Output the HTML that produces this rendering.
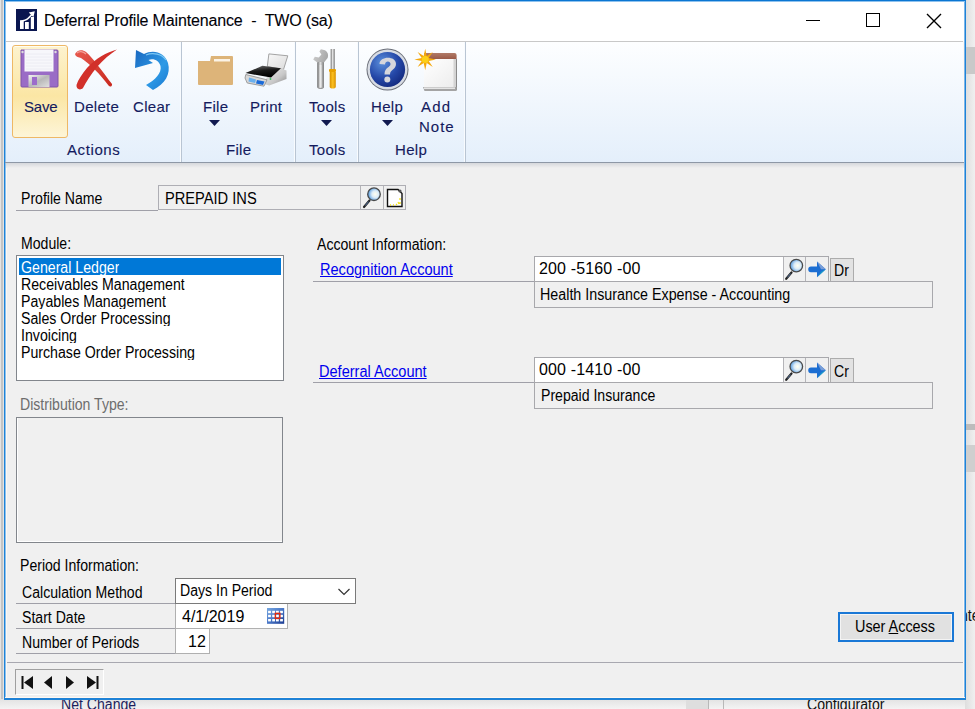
<!DOCTYPE html>
<html><head><meta charset="utf-8">
<style>
*{margin:0;padding:0;box-sizing:border-box}
html,body{width:975px;height:709px;overflow:hidden;background:#f3f3f3;font-family:"Liberation Sans",sans-serif;position:relative}
div,span,svg{position:absolute}
.rt{font-size:15px;color:#141b5e;white-space:nowrap;line-height:18px;letter-spacing:0.3px;-webkit-text-stroke:0.12px #141b5e}
.ft{font-size:16px;color:#000;white-space:nowrap;letter-spacing:0;line-height:18px;transform:scaleX(0.88);transform-origin:0 0}
.ul{height:1px;background:#a0a0a8}
.box{border:1px solid #a3a3a3}
</style></head><body>
<!-- background app -->
<div style="left:0;top:0;width:4px;height:709px;background:#e4e4e4"></div>
<div style="left:1px;top:0;width:2px;height:709px;background:#c4c4c4"></div>
<div style="left:0;top:699px;width:975px;height:10px;background:linear-gradient(#e2e2e2,#f4f4f4)"></div>
<div style="left:686px;top:699px;width:22px;height:10px;background:#dedede"></div>
<div style="left:708px;top:699px;width:1px;height:10px;background:#b8b8b8"></div>
<div style="left:723px;top:699px;width:1px;height:10px;background:#b8b8b8"></div>
<div class="ft" style="left:61px;top:696px;color:#1e1e5c">Net Change</div>
<div class="ft" style="left:807px;top:696px;color:#111">Configurator</div>
<div style="left:965px;top:0;width:10px;height:709px;background:linear-gradient(90deg,#dedede,#f0f0f0)"></div>
<div style="left:965px;top:47px;width:10px;height:27px;background:#c9c9c9"></div>
<div style="left:965px;top:424px;width:10px;height:6px;background:#bcbcbc"></div>
<div style="left:965px;top:445px;width:10px;height:27px;background:#cfcfcf"></div>
<div class="ft" style="left:960px;top:607px;color:#111">nte</div>

<!-- window frame -->
<div style="left:4px;top:0;width:962px;height:700px;border:1px solid #1f82d6;border-top-color:#0a76d2;border-bottom-width:2px;background:#f0f0f0"></div>
<div style="left:5px;top:1px;width:1px;height:697px;background:#8cc2ee"></div>
<div style="left:964px;top:1px;width:1px;height:697px;background:#7ab6ea"></div>
<div style="left:6px;top:1px;width:1px;height:696px;background:#fff8f2"></div>
<div style="left:963px;top:1px;width:1px;height:696px;background:#fff8f2"></div>
<div style="left:5px;top:697px;width:960px;height:1px;background:#fff8f2"></div>
<!-- title bar -->
<div style="left:6px;top:1px;width:958px;height:40px;background:#fff"></div>
<div style="left:5px;top:1px;width:960px;height:1px;background:#8ec2ee"></div>
<div style="left:6px;top:41px;width:957px;height:1px;background:#c8c8c8"></div>
<div class="rt" style="left:44px;top:12px;font-size:16px;color:#000;letter-spacing:-0.15px">Deferral Profile Maintenance&nbsp; -&nbsp; TWO (sa)</div>
<!-- ribbon -->
<div style="left:6px;top:42px;width:957px;height:120px;background:linear-gradient(#fdfeff,#e4effb)"></div>
<div style="left:5px;top:162px;width:959px;height:1px;background:#8e98a6"></div>
<div style="left:6px;top:163px;width:958px;height:5px;background:linear-gradient(#d6d8dc,#f0f0f0)"></div>

<!-- title icon -->
<svg style="left:16px;top:9px" width="21" height="22" viewBox="0 0 21 22">
<rect x="0" y="0" width="21" height="22" fill="#0a1650"/>
<rect x="4" y="12" width="3.7" height="8" fill="#fff"/>
<rect x="9" y="13" width="3.8" height="7" fill="#fff"/>
<rect x="14.8" y="8" width="3.2" height="12" fill="#fff"/>
<path d="M4 12.2 C7 11.8 10 11.5 12 9.5 L16 5.5" stroke="#fff" stroke-width="1.7" fill="none"/>
<path d="M18.8 2.2 L12.8 3.6 L17.4 8.2 Z" fill="#fff"/>
</svg>
<!-- window controls -->
<div style="left:806px;top:20px;width:14px;height:1.4px;background:#000"></div>
<div style="left:866px;top:13px;width:14px;height:14px;border:1.3px solid #000"></div>
<svg style="left:926px;top:13px" width="16" height="16" viewBox="0 0 16 16"><path d="M1 1 L15 15 M15 1 L1 15" stroke="#000" stroke-width="1.4"/></svg>

<!-- separators -->
<div style="left:180px;top:42px;width:1px;height:120px;background:#f8fbfe"></div>
<div style="left:181px;top:42px;width:1px;height:120px;background:#b9c5d3"></div>
<div style="left:294px;top:42px;width:1px;height:120px;background:#f8fbfe"></div>
<div style="left:295px;top:42px;width:1px;height:120px;background:#b9c5d3"></div>
<div style="left:357px;top:42px;width:1px;height:120px;background:#f8fbfe"></div>
<div style="left:358px;top:42px;width:1px;height:120px;background:#b9c5d3"></div>
<div style="left:464px;top:42px;width:1px;height:120px;background:#f8fbfe"></div>
<div style="left:465px;top:42px;width:1px;height:120px;background:#b9c5d3"></div>

<!-- save highlight -->
<div style="left:12px;top:45px;width:56px;height:93px;border:1px solid #eeb866;border-radius:3px;box-shadow:inset 0 1px 0 #fffdf0;background:linear-gradient(#fdf3cf,#fbe6a4 55%,#fdf5d8)"></div>
<!-- floppy -->
<svg style="left:20px;top:49px" width="39" height="39" viewBox="0 0 39 39">
<defs><linearGradient id="sh" x1="0" y1="0" x2="1" y2="1"><stop offset="0" stop-color="#f4f4f4"/><stop offset="0.5" stop-color="#b8b8b8"/><stop offset="1" stop-color="#e0e0e0"/></linearGradient></defs>
<path d="M1 1 H37 Q38 1 38 2 V37 Q38 38 37 38 H2 Q1 38 1 37 Z" fill="#9a6cc6" stroke="#7e54aa" stroke-width="1"/>
<rect x="4.5" y="0.5" width="29" height="22" fill="#f7f7fb"/>
<path d="M6 5 H32 M6 8 H32 M6 11 H32 M6 14 H32 M6 17 H32 M6 20 H32" stroke="#eaeaf2" stroke-width="0.8"/>
<rect x="8.5" y="26" width="21" height="12" fill="url(#sh)"/>
<rect x="12" y="28" width="5" height="8" fill="#9c6bcb"/>
<circle cx="2.5" cy="3" r="1.2" fill="#ddd"/><circle cx="35.5" cy="3" r="1.2" fill="#ddd"/>
</svg>
<!-- delete X -->
<svg style="left:75px;top:49px" width="43" height="42" viewBox="0 0 43 42">
<defs><linearGradient id="xg" x1="0" y1="0" x2="1" y2="1"><stop offset="0" stop-color="#e85a4e"/><stop offset="1" stop-color="#c8281e"/></linearGradient></defs>
<path d="M0 5 C2 1 7 0 11 3 C18 9 27 22 37 35 C37.5 37.5 35 38.5 33.5 36.5 C25 25 15 15 6 9 C4 8 1 8.5 0 5 Z" fill="url(#xg)"/>
<path d="M42 0.5 C32 3 20 10 12 19 C7 25 3 31 1.5 36 C1 40 5 42 8 39 C11 33 16 25 22 18 C28 11 35 5 42 0.5 Z" fill="#d2302a"/>
<path d="M2 4 C4 2 8 2 11 5" stroke="#f2a098" stroke-width="1.2" fill="none"/>
</svg>
<!-- clear undo -->
<svg style="left:133px;top:49px" width="38" height="42" viewBox="0 0 38 42">
<defs><linearGradient id="ug" x1="0" y1="0" x2="1" y2="1"><stop offset="0" stop-color="#1a68c0"/><stop offset="0.6" stop-color="#2e9ae6"/><stop offset="1" stop-color="#1a78d0"/></linearGradient></defs>
<path d="M3 1 L2 19 L20 14 L15.5 11 C21 9 26 12 27.5 17 C29 24 22 31 13 36 L20 41 C32 35 38 25 35 14 C32 4 21 0 11 5 Z" fill="url(#ug)"/>
<path d="M13 6 C20 3 29 5 33 11" stroke="#7cc8f4" stroke-width="1.2" fill="none"/>
</svg>
<!-- folder -->
<svg style="left:197px;top:55px" width="37" height="31" viewBox="0 0 37 31">
<path d="M1 6 H13 L14 1 H35 Q36 1 36 2 V29 Q36 30 35 30 H2 Q1 30 1 29 Z" fill="#ddb479"/>
<rect x="17" y="4" width="16" height="2.5" fill="#fbf3e6"/>
</svg>
<!-- printer -->
<svg style="left:240px;top:48px" width="52" height="44" viewBox="0 0 52 44">
<defs><linearGradient id="pg" x1="0" y1="0" x2="0.3" y2="1"><stop offset="0" stop-color="#777"/><stop offset="0.5" stop-color="#1a1a1a"/><stop offset="1" stop-color="#000"/></linearGradient>
<linearGradient id="pf" x1="0" y1="0" x2="1" y2="1"><stop offset="0" stop-color="#f0f0f0"/><stop offset="0.6" stop-color="#c8c8c8"/><stop offset="1" stop-color="#888"/></linearGradient>
<linearGradient id="pp" x1="0" y1="0" x2="1" y2="1"><stop offset="0" stop-color="#f8f8f8"/><stop offset="1" stop-color="#dcdcdc"/></linearGradient></defs>
<path d="M28.9 5.9 L47.8 7.8 L43.5 21.5 L27.3 18.5 Z" fill="url(#pp)" stroke="#9a9a9a" stroke-width="0.9"/>
<path d="M40 20 L46.5 22.4 L46.5 31 L29.2 37.6 L24 36 L27 29 Z" fill="url(#pf)"/>
<path d="M5.5 25 L22.4 17.8 L41 20.3 L31 29.6 Z" fill="url(#pg)"/>
<path d="M5.8 26.5 L27 31.8 L24 38.2 L7.2 35 L5 30 Z" fill="#d8d8d8" stroke="#8a8a8a" stroke-width="0.8"/>
<path d="M9 29.5 L16 31.5 L15 35 L8.5 33.5 Z" fill="#6ab0ee"/>
<path d="M17 32 L24.5 33.5 L23 37 L16 35.5 Z" fill="#1a6ad8"/>
<circle cx="30.5" cy="31" r="0.9" fill="#3cc060"/>
</svg>

<!-- tools -->
<svg style="left:312px;top:48px" width="26" height="42" viewBox="0 0 26 42">
<defs><linearGradient id="wg" x1="0" y1="0" x2="1" y2="0"><stop offset="0" stop-color="#6a6a6a"/><stop offset="0.45" stop-color="#e4e4e4"/><stop offset="1" stop-color="#7a7a7a"/></linearGradient>
<linearGradient id="wh" x1="0" y1="0" x2="1" y2="1"><stop offset="0" stop-color="#d0d0d0"/><stop offset="1" stop-color="#8a8a8a"/></linearGradient>
<linearGradient id="yh" x1="0" y1="0" x2="1" y2="0"><stop offset="0" stop-color="#d89000"/><stop offset="0.5" stop-color="#fcc020"/><stop offset="1" stop-color="#d89000"/></linearGradient></defs>
<path d="M8.9 1.2 L13 2.2 C15.8 3.8 16.8 7 15.6 10 L12 14.6 L11.8 39 Q11.8 41 8.6 41 Q5.4 41 5.4 39 L5.4 14.6 L1.2 11.6 L2.8 8.8 L6.8 9.4 L9.4 6.4 L7.4 3.4 Z" fill="url(#wh)"/>
<rect x="5.4" y="14" width="6.4" height="26" rx="1" fill="url(#wg)"/>
<rect x="7.6" y="17" width="2" height="22" fill="#f2f2f2" opacity="0.6"/>
<rect x="18.7" y="1" width="4.1" height="21" fill="url(#wg)"/>
<rect x="17" y="21" width="7" height="3" rx="1" fill="#e8a000"/>
<path d="M17.7 24 H23.8 V38.5 Q23.8 40.5 20.75 40.5 Q17.7 40.5 17.7 38.5 Z" fill="url(#yh)"/>
</svg>

<!-- help -->
<svg style="left:366px;top:48px" width="44" height="44" viewBox="0 0 44 44">
<defs><radialGradient id="hg" cx="0.35" cy="0.3" r="0.75"><stop offset="0" stop-color="#5b8fdc"/><stop offset="0.6" stop-color="#2548a8"/><stop offset="1" stop-color="#142a80"/></radialGradient></defs>
<circle cx="21.5" cy="21.5" r="21" fill="#6a6e78"/>
<circle cx="21.5" cy="21.5" r="20" fill="#d8dce4"/>
<circle cx="21.5" cy="21.5" r="17.6" fill="url(#hg)"/>
<path d="M13.5 16 C13.5 8 30 7.5 30 16 C30 21.5 24 21.5 24 26.5 L18.5 26.5 C18.5 19 24.5 19.5 24.5 16 C24.5 12.5 19 12.5 19 16.5 Z" fill="#d6d6dc"/>
<circle cx="21.3" cy="31.5" r="3" fill="#d6d6dc"/>
</svg>
<!-- add note -->
<svg style="left:413px;top:48px" width="46" height="46" viewBox="0 0 46 46">
<defs><linearGradient id="ng" x1="0" y1="0" x2="1" y2="1"><stop offset="0" stop-color="#fff"/><stop offset="1" stop-color="#ececec"/></linearGradient>
<linearGradient id="nb" x1="0" y1="0" x2="0" y2="1"><stop offset="0" stop-color="#b07a68"/><stop offset="1" stop-color="#9a5a48"/></linearGradient></defs>
<path d="M11 11 V5 H41.5 Q43.6 5 43.6 7 V11 Z" fill="url(#nb)"/>
<rect x="11" y="11" width="32.6" height="28" fill="url(#ng)"/>
<rect x="40.5" y="11" width="3.1" height="28" fill="#d4d4d4"/>
<rect x="43" y="11" width="1" height="31" fill="#8a8a8a"/>
<path d="M10 39 H43.6 V43 H11.5 Z" fill="#a4a4a4"/>
<path d="M11 39.5 H42 V40.8 H11 Z" fill="#f4f4f4"/>
<path d="M12.2 0.7 L10.7 8.0 L4.6 3.9 L8.7 10.0 L1.4 11.5 L8.7 13.0 L4.6 19.1 L10.7 15.0 L12.2 22.3 L13.7 15.0 L19.8 19.1 L15.7 13.0 L23.0 11.5 L15.7 10.0 L19.8 3.9 L13.7 8.0 Z" fill="#f4a80c"/>
<circle cx="12.2" cy="11.5" r="3.5" fill="#fcd018"/>
</svg>

<!-- ribbon text -->
<div class="rt" style="left:24px;top:98px;letter-spacing:-0.2px">Save</div>
<div class="rt" style="left:74px;top:98px">Delete</div>
<div class="rt" style="left:133px;top:98px">Clear</div>
<div class="rt" style="left:67px;top:141px;letter-spacing:0.6px">Actions</div>
<div class="rt" style="left:203px;top:98px">File</div>
<div class="rt" style="left:250px;top:98px">Print</div>
<div class="rt" style="left:226px;top:141px">File</div>
<div class="rt" style="left:309px;top:98px">Tools</div>
<div class="rt" style="left:309px;top:141px">Tools</div>
<div class="rt" style="left:371px;top:98px">Help</div>
<div class="rt" style="left:421px;top:98px;letter-spacing:1.2px">Add</div>
<div class="rt" style="left:419px;top:118px;letter-spacing:1px">Note</div>
<div class="rt" style="left:395px;top:141px">Help</div>
<svg style="left:209px;top:120px" width="11" height="6"><path d="M0 0 H11 L5.5 6 Z" fill="#111a50"/></svg>
<svg style="left:321px;top:120px" width="11" height="6"><path d="M0 0 H11 L5.5 6 Z" fill="#111a50"/></svg>
<svg style="left:382px;top:120px" width="11" height="6"><path d="M0 0 H11 L5.5 6 Z" fill="#111a50"/></svg>

<!-- ===== FORM ===== -->
<div style="left:7px;top:662px;width:956px;height:1px;background:#a8a8b0"></div>

<!-- Profile name -->
<div class="ft" style="left:21px;top:190px">Profile Name</div>
<div class="ul" style="left:16px;top:210px;width:142px"></div>
<div style="left:158px;top:185px;width:248px;height:25px;border:1px solid #aeaeb4;background:#f0f0f0"></div>
<div style="left:360px;top:186px;width:1px;height:23px;background:#b4b4b8"></div>
<div style="left:383px;top:186px;width:1px;height:23px;background:#b4b4b8"></div>
<div class="ft" style="left:165px;top:190px;transform:scaleX(0.915)">PREPAID INS</div>
<svg style="left:361px;top:186px" width="22" height="23" viewBox="0 0 22 23">
<defs><radialGradient id="lg1" cx="0.6" cy="0.5" r="0.6"><stop offset="0" stop-color="#fffff0"/><stop offset="0.45" stop-color="#dcecf8"/><stop offset="1" stop-color="#4a94dc"/></radialGradient></defs>
<path d="M8.5 14.5 L3 21" stroke="#222" stroke-width="2.2" stroke-linecap="round"/>
<path d="M7.6 15.6 L4.2 19.6" stroke="#6a90c8" stroke-width="0.8"/>
<circle cx="13" cy="8.2" r="6.3" fill="url(#lg1)" stroke="#4a4a4a" stroke-width="1.3"/>
</svg>
<svg style="left:384px;top:186px" width="21" height="23" viewBox="0 0 21 23">
<path d="M3.5 3.5 H14 L18 7.5 V20.5 H3.5 Z" fill="#fff" stroke="#111" stroke-width="1.4"/>
<circle cx="16" cy="5" r="1.6" fill="#555"/>
<path d="M16 12 L16 14 M14 16 L15 18 M12 18 L13 19 M9 19 L10 19 M6 19 L7 19 M16 16 L16 18" stroke="#f2e020" stroke-width="1.3"/>
</svg>

<!-- Module -->
<div class="ft" style="left:21px;top:235px">Module:</div>
<div style="left:16px;top:255px;width:268px;height:126px;border:1px solid #82868c;background:#fff"></div>
<div style="left:19px;top:258px;width:262px;height:17px;background:#0078d7"></div>
<div style="left:21px;top:258px;width:259px;height:119px;overflow:hidden">
 <div class="ft" style="left:0;top:0;height:17px;overflow:hidden;color:#fff;line-height:20px;transform:scaleX(0.885)">General Ledger</div>
 <div class="ft" style="left:0;top:17px;height:17px;overflow:hidden;line-height:20px;transform:scaleX(0.885)">Receivables Management</div>
 <div class="ft" style="left:0;top:34px;height:17px;overflow:hidden;line-height:20px;transform:scaleX(0.885)">Payables Management</div>
 <div class="ft" style="left:0;top:51px;height:17px;overflow:hidden;line-height:20px;transform:scaleX(0.885)">Sales Order Processing</div>
 <div class="ft" style="left:0;top:68px;height:17px;overflow:hidden;line-height:20px;transform:scaleX(0.885)">Invoicing</div>
 <div class="ft" style="left:0;top:85px;height:17px;overflow:hidden;line-height:20px;transform:scaleX(0.885)">Purchase Order Processing</div>
</div>

<!-- Distribution type -->
<div class="ft" style="left:20px;top:396px;color:#6d6d6d">Distribution Type:</div>
<div style="left:16px;top:417px;width:267px;height:126px;border:1px solid #82868c;box-shadow:inset 1px -1px 0 #fff"></div>

<!-- Period information -->
<div class="ft" style="left:20px;top:557px">Period Information:</div>
<div class="ft" style="left:22px;top:584px">Calculation Method</div>
<div class="ft" style="left:22px;top:609px">Start Date</div>
<div class="ft" style="left:22px;top:634px">Number of Periods</div>
<div class="ul" style="left:16px;top:603px;width:160px"></div>
<div class="ul" style="left:16px;top:628px;width:160px"></div>
<div class="ul" style="left:16px;top:653px;width:160px"></div>
<div style="left:175px;top:578px;width:181px;height:26px;border:1px solid #7a7a7a;background:#fff"></div>
<div class="ft" style="left:180px;top:582px">Days In Period</div>
<svg style="left:338px;top:588px" width="12" height="8"><path d="M0.5 1 L6 6.5 L11.5 1" stroke="#333" stroke-width="1.2" fill="none"/></svg>
<div style="left:175px;top:604px;width:113px;height:25px;border:1px solid #b0b0b0;border-top:none;background:#fff"></div>
<div class="ft" style="left:182px;top:608px;transform:none">4/1/2019</div>
<svg style="left:267px;top:608px" width="18" height="16" viewBox="0 0 18 16">
<defs><linearGradient id="cg" x1="0" y1="0" x2="1" y2="1"><stop offset="0" stop-color="#78a8e0"/><stop offset="0.5" stop-color="#4a78c8"/><stop offset="1" stop-color="#1a3a90"/></linearGradient></defs>
<rect x="0" y="0" width="17.2" height="15.8" fill="url(#cg)"/>
<rect x="1.1" y="2.8" width="2.8" height="2.4" fill="#fff"/><rect x="1.1" y="6.8" width="2.8" height="2.4" fill="#fff"/><rect x="1.1" y="11.0" width="2.8" height="2.4" fill="#fff"/><rect x="5.2" y="2.8" width="2.8" height="2.4" fill="#fff"/><rect x="5.2" y="6.8" width="2.8" height="2.4" fill="#fff"/><rect x="5.2" y="11.0" width="2.8" height="2.4" fill="#fff"/><rect x="9.0" y="2.8" width="2.8" height="2.4" fill="#fff"/><rect x="9.0" y="6.8" width="2.8" height="2.4" fill="#fff"/><rect x="9.0" y="11.0" width="2.8" height="2.4" fill="#fff"/><rect x="13.1" y="2.8" width="2.8" height="2.4" fill="#fff"/><rect x="13.1" y="6.8" width="2.8" height="2.4" fill="#fff"/><rect x="13.1" y="11.0" width="2.8" height="2.4" fill="#fff"/>
<rect x="8.4" y="5.4" width="4.4" height="5" fill="none" stroke="#e02a10" stroke-width="1.5"/>
</svg>
<div style="left:175px;top:629px;width:35px;height:25px;border:1px solid #b0b0b0;border-top:none;background:#fff"></div>
<div class="ft" style="left:188px;top:633px;transform:none">12</div>

<!-- Account information -->
<div class="ft" style="left:317px;top:236px">Account Information:</div>
<div class="ft" style="left:320px;top:261px;color:#0000ee;text-decoration:underline;transform:scaleX(0.91)">Recognition Account</div>
<div class="ul" style="left:313px;top:281px;width:222px"></div>
<div class="ft" style="left:319px;top:363px;color:#0000ee;text-decoration:underline;transform:scaleX(0.91)">Deferral Account</div>
<div class="ul" style="left:313px;top:382px;width:222px"></div>

<!-- recognition acct -->
<div style="left:534px;top:256px;width:295px;height:26px;border:1px solid #a8a8ac;background:#f0f0f0"></div>
<div style="left:535px;top:257px;width:248px;height:24px;background:#fff"></div>
<div style="left:783px;top:257px;width:1px;height:24px;background:#b4b4b8"></div>
<div style="left:805px;top:257px;width:1px;height:24px;background:#b4b4b8"></div>
<div class="ft" style="left:539px;top:260px;letter-spacing:0.15px;transform:none">200 -5160 -00</div>
<div style="left:830px;top:258px;width:24px;height:24px;border:1px solid #acacac;background:#e2e2e2"></div>
<div class="ft" style="left:834px;top:262px">Dr</div>
<div style="left:534px;top:281px;width:399px;height:27px;border:1px solid #a8a8ac;background:#f0f0f0"></div>
<div class="ft" style="left:540px;top:286px;transform:scaleX(0.893)">Health Insurance Expense - Accounting</div>

<!-- deferral acct -->
<div style="left:534px;top:357px;width:295px;height:26px;border:1px solid #a8a8ac;background:#f0f0f0"></div>
<div style="left:535px;top:358px;width:248px;height:24px;background:#fff"></div>
<div style="left:783px;top:358px;width:1px;height:24px;background:#b4b4b8"></div>
<div style="left:805px;top:358px;width:1px;height:24px;background:#b4b4b8"></div>
<div class="ft" style="left:539px;top:361px;letter-spacing:0.15px;transform:none">000 -1410 -00</div>
<div style="left:830px;top:358px;width:24px;height:25px;border:1px solid #acacac;background:#e2e2e2"></div>
<div class="ft" style="left:834px;top:363px">Cr</div>
<div style="left:534px;top:382px;width:399px;height:27px;border:1px solid #a8a8ac;background:#f0f0f0"></div>
<div class="ft" style="left:541px;top:387px">Prepaid Insurance</div>


<svg style="left:784px;top:257px" width="21" height="24" viewBox="0 0 21 24">
<path d="M7.5 15.5 L2.2 21.8" stroke="#222" stroke-width="2.2" stroke-linecap="round"/>
<path d="M6.6 16.6 L3.4 20.4" stroke="#6a90c8" stroke-width="0.8"/>
<circle cx="12.3" cy="8.6" r="6.3" fill="url(#lg1)" stroke="#4a4a4a" stroke-width="1.3"/>
</svg>
<svg style="left:806px;top:257px" width="22" height="24" viewBox="0 0 22 24">
<path d="M5 9.4 H11 L11 4.6 L19.8 12.3 L11 20.3 L11 15.3 H5 Q2.2 15.3 2.2 12.35 Q2.2 9.4 5 9.4 Z" fill="#1c6ed2"/>
<path d="M11 4.6 L19.8 12.3 L15 12.3 Z" fill="#7a9ed8"/>
<path d="M11 20.3 L19.8 12.3 L15.5 14.5 Z" fill="#1aa0c8"/>
</svg>
<svg style="left:784px;top:358px" width="21" height="24" viewBox="0 0 21 24">
<path d="M7.5 15.5 L2.2 21.8" stroke="#222" stroke-width="2.2" stroke-linecap="round"/>
<path d="M6.6 16.6 L3.4 20.4" stroke="#6a90c8" stroke-width="0.8"/>
<circle cx="12.3" cy="8.6" r="6.3" fill="url(#lg1)" stroke="#4a4a4a" stroke-width="1.3"/>
</svg>
<svg style="left:806px;top:358px" width="22" height="24" viewBox="0 0 22 24">
<path d="M5 9.4 H11 L11 4.6 L19.8 12.3 L11 20.3 L11 15.3 H5 Q2.2 15.3 2.2 12.35 Q2.2 9.4 5 9.4 Z" fill="#1c6ed2"/>
<path d="M11 4.6 L19.8 12.3 L15 12.3 Z" fill="#7a9ed8"/>
<path d="M11 20.3 L19.8 12.3 L15.5 14.5 Z" fill="#1aa0c8"/>
</svg>
<!-- user access -->
<div style="left:838px;top:612px;width:116px;height:30px;border:2px solid #1a78d6;background:#e1e1e1;box-shadow:inset 0 0 0 1px #f4f4f4"></div>
<div class="ft" style="left:855px;top:618px;transform:scaleX(0.9)">User <u>A</u>ccess</div>

<!-- browse buttons -->
<div style="left:15px;top:669px;width:89px;height:26px;border-top:1px solid #a0a0a0;border-left:1px solid #a0a0a0;border-right:1px solid #fff;border-bottom:1px solid #fff"></div>
<svg style="left:21px;top:676px" width="80" height="14" viewBox="0 0 80 14">
<rect x="0.5" y="0" width="2" height="13" fill="#111"/>
<path d="M12 0 L3 6.5 L12 13 Z" fill="#111"/>
<path d="M31 0 L23 6.5 L31 13 Z" fill="#111"/>
<path d="M45 0 L53 6.5 L45 13 Z" fill="#111"/>
<path d="M66 0 L75 6.5 L66 13 Z" fill="#111"/>
<rect x="75.5" y="0" width="2" height="13" fill="#111"/>
</svg>
</body></html>
